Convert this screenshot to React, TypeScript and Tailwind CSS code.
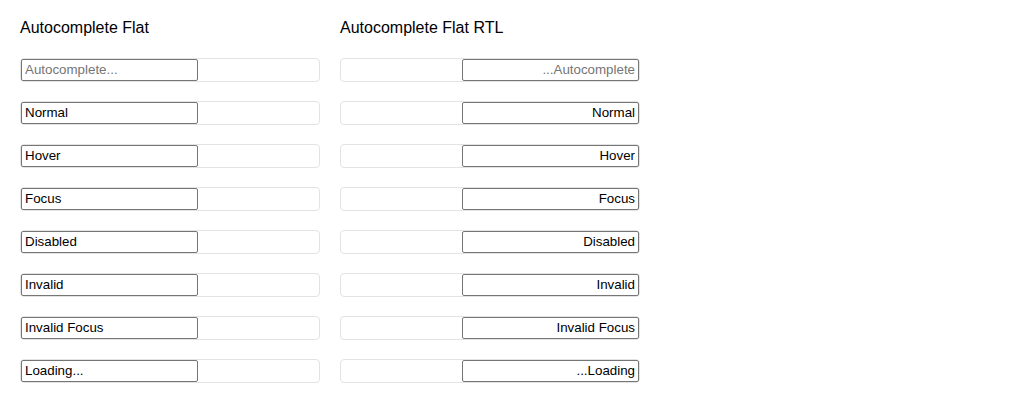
const rows = [
  { label: '', placeholder: 'Autocomplete...' },
  { label: 'Normal' },
  { label: 'Hover' },
  { label: 'Focus' },
  { label: 'Disabled' },
  { label: 'Invalid' },
  { label: 'Invalid Focus' },
  { label: 'Loading...' },
]

function Field({ value, placeholder, rtl }: { value: string; placeholder?: string; rtl?: boolean }) {
  return (
    <div
      dir={rtl ? 'rtl' : 'ltr'}
      className="flex h-[24px] w-[300px] items-center rounded-[4px] border border-[#e3e3e3]"
    >
      <input
        type="text"
        readOnly
        value={value}
        placeholder={placeholder}
        className="h-[22px] w-[177px] rounded-[2px] border border-[#767676] bg-white px-[3px] pb-[2px] text-[13.33px] text-black placeholder-[#757575] outline-none"
      />
    </div>
  )
}

function Column({ title, rtl }: { title: string; rtl?: boolean }) {
  return (
    <section className="flex w-[300px] flex-col">
      <h2 className="mb-[21px] h-[18px] text-[16px] leading-[18px] text-black">{title}</h2>
      <div className="flex flex-col gap-[19px]">
        {rows.map((r, i) => (
          <Field key={i} value={r.label} placeholder={r.placeholder} rtl={rtl} />
        ))}
      </div>
    </section>
  )
}

export default function App() {
  return (
    <main className="flex h-[402px] w-[1024px] gap-[20px] bg-white px-[20px] pt-[19px] font-['Liberation_Sans',Arial,sans-serif]">
      <Column title="Autocomplete Flat" />
      <Column title="Autocomplete Flat RTL" rtl />
    </main>
  )
}
